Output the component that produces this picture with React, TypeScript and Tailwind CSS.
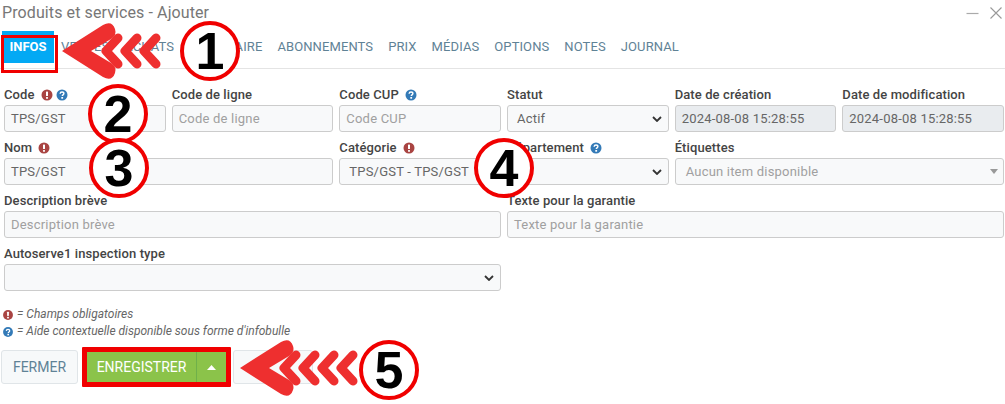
import React from "react";

const Req = () => (
  <svg width="12" height="12" viewBox="0 0 12 12" className="inline-block shrink-0">
    <circle cx="6" cy="6" r="5.5" fill="#a94442" />
    <rect x="5" y="2.4" width="2" height="4.6" rx="0.6" fill="#fff" />
    <rect x="5" y="8" width="2" height="1.8" rx="0.5" fill="#fff" />
  </svg>
);

const Help = () => (
  <svg width="12" height="12" viewBox="0 0 12 12" className="inline-block shrink-0">
    <circle cx="6" cy="6" r="5.5" fill="#337ab7" />
    <path d="M4.1 4.7C4.2 3.5 5 3 6 3c1.1 0 1.9.6 1.9 1.6 0 1.3-1.6 1.3-1.6 2.4" stroke="#fff" strokeWidth="1.4" fill="none" />
    <rect x="5.3" y="8" width="1.8" height="1.7" fill="#fff" />
  </svg>
);

const Label = ({ text, req, help }: { text: string; req?: boolean; help?: boolean }) => (
  <div className="flex items-center gap-[3px] h-[16px] mb-[2px] text-[13px] font-medium text-[#444] whitespace-nowrap tracking-[0.1px]">
    <span className="mr-[3px]">{text}</span>
    {req && <Req />}
    {help && <Help />}
  </div>
);

const boxCls =
  "h-[27px] w-full rounded-[3px] border border-[#ccc] bg-[#f8f9fa] px-[6px] text-[13px] flex items-center tracking-[0.2px] whitespace-nowrap";

const Input = ({ value, placeholder }: { value?: string; placeholder?: string }) => (
  <div className={boxCls + (value ? " text-[#666]" : " text-[#a0a0a0]")}>{value ?? placeholder}</div>
);

const ReadOnly = ({ value }: { value: string }) => (
  <div className="h-[27px] w-full rounded-[3px] border border-[#ccc] bg-[#e9ecef] px-[6px] text-[13px] flex items-center text-[#666] tracking-[0.2px] whitespace-nowrap">
    {value}
  </div>
);

const Caret = () => (
  <svg width="10" height="6" viewBox="0 0 10 6" className="shrink-0 ml-auto">
    <path d="M1 1l4 4 4-4" stroke="#333" strokeWidth="1.8" fill="none" />
  </svg>
);

const Select = ({ value, pl }: { value?: string; pl?: boolean }) => (
  <div className={boxCls + " text-[#666] bg-[#f8f9fa]" + (pl ? " pl-[9px]" : "")}>
    <span>{value}</span>
    <Caret />
  </div>
);

const tabs = [
  ["VENTES", ""],
  ["ACHATS", ""],
  ["INVENTAIRE", ""],
  ["ABONNEMENTS", ""],
  ["PRIX", ""],
  ["MÉDIAS", ""],
  ["OPTIONS", ""],
  ["NOTES", ""],
  ["JOURNAL", ""],
];

const Arrow = ({ x, y, n }: { x: number; y: number; n: number }) => (
  <g transform={`translate(${x} ${y})`}>
    <path
      d="M0 0 L41 -26 Q50 -31 53 -22 Q55 -16 49 -12 L29 0 L49 12 Q55 16 53 22 Q50 31 41 26 Z"
      fill="#ee2f2f"
    />
    {Array.from({ length: n }).map((_, i) => (
      <polyline
        key={i}
        points={`${56 + i * 19},-13 ${44 + i * 19},0 ${56 + i * 19},13`}
        fill="none"
        stroke="#ee2f2f"
        strokeWidth="9"
        strokeLinecap="round"
        strokeLinejoin="round"
      />
    ))}
  </g>
);

const Badge = ({ n, left, top }: { n: string; left: string; top: string }) => (
  <div
    className={`absolute ${left} ${top} w-[60px] h-[60px] rounded-full border-[4px] border-[#f00000] bg-white flex items-center justify-center text-black font-bold text-[52px] leading-none font-['Liberation_Sans',sans-serif]`}
  >
    {n}
  </div>
);

export default function App() {
  return (
    <div className="relative w-[1005px] h-[404px] overflow-hidden bg-white font-['Roboto',sans-serif]">
      {/* Title bar */}
      <div className="flex items-center justify-between h-[26px] pl-[2px] pr-[3px]">
        <div className="text-[16px] text-[#777] tracking-[0.1px]">Produits et services - Ajouter</div>
        <div className="flex items-center gap-[11px] text-[#999]">
          <svg width="13" height="13" viewBox="0 0 13 13">
            <path d="M0.5 6.5h12" stroke="#aaa" strokeWidth="1.2" />
          </svg>
          <svg width="12" height="12" viewBox="0 0 12 12">
            <path d="M0.5 0.5l11 11M11.5 0.5l-11 11" stroke="#999" strokeWidth="1.1" />
          </svg>
        </div>
      </div>

      {/* Tabs */}
      <div className="flex items-center h-[43px] border-b-[1px] border-[#e4e4e4] pl-[2px] mb-[18px]">
        <div className="h-[32px] w-[52px] mr-[7px] bg-[#03a9f4] text-white font-bold text-[13px] flex items-center justify-center">
          INFOS
        </div>
        {tabs.map(([t]) => (
          <div key={t} className="text-[13px] text-[#5f8296] tracking-[0.1px] mr-[15px] whitespace-nowrap">
            {t}
          </div>
        ))}
      </div>

      {/* Form */}
      <div className="grid grid-cols-6 gap-x-[6px] gap-y-[8px] pl-[4px] pr-[1px]">
        <div>
          <Label text="Code" req help />
          <Input value="TPS/GST" />
        </div>
        <div>
          <Label text="Code de ligne" />
          <Input placeholder="Code de ligne" />
        </div>
        <div>
          <Label text="Code CUP" help />
          <Input placeholder="Code CUP" />
        </div>
        <div>
          <Label text="Statut" />
          <Select value="Actif" pl />
        </div>
        <div>
          <Label text="Date de création" />
          <ReadOnly value="2024-08-08 15:28:55" />
        </div>
        <div>
          <Label text="Date de modification" />
          <ReadOnly value="2024-08-08 15:28:55" />
        </div>

        <div className="col-span-2">
          <Label text="Nom" req />
          <Input value="TPS/GST" />
        </div>
        <div>
          <Label text="Catégorie" req />
          <Select value="TPS/GST - TPS/GST" pl />
        </div>
        <div>
          <Label text="Département" help />
          <Select value="" />
        </div>
        <div className="col-span-2">
          <Label text="Étiquettes" />
          <div className={boxCls + " text-[#a0a0a0]"}>
            <span className="pl-[4px]">Aucun item disponible</span>
            <svg width="8" height="5" viewBox="0 0 8 5" className="ml-auto mr-[-1px]">
              <path d="M0 0h8L4 5z" fill="#999" />
            </svg>
          </div>
        </div>

        <div className="col-span-3">
          <Label text="Description brève" />
          <Input placeholder="Description brève" />
        </div>
        <div className="col-span-3">
          <Label text="Texte pour la garantie" />
          <Input placeholder="Texte pour la garantie" />
        </div>

        <div className="col-span-3">
          <Label text="Autoserve1 inspection type" />
          <Select value="" />
        </div>
      </div>

      {/* Legend */}
      <div className="mt-[15px] pl-[2px] text-[12px] italic text-[#666] leading-[17px]">
        <div className="flex items-center gap-[3px]">
          <span className="flex scale-90"><Req /></span>= Champs obligatoires
        </div>
        <div className="flex items-center gap-[3px]">
          <span className="flex scale-90"><Help /></span>= Aide contextuelle disponible sous forme d'infobulle
        </div>
      </div>

      {/* Buttons */}
      <div className="flex items-center mt-[7px] pl-[1px]">
        <div className="h-[34px] w-[77px] rounded-[3px] border border-[#e0e5e8] bg-[#f7f9fa] text-[14px] text-[#5f8296] flex items-center justify-center">
          FERMER
        </div>
        <div className="ml-[4px] flex h-[40px] w-[149px] border-[5px] border-[#f00000] bg-[#8bc34a] rounded-[1px] text-white text-[14px]">
          <div className="w-[110px] flex items-center justify-center border-r border-[#6fb04a]">ENREGISTRER</div>
          <div className="flex-1 flex items-center justify-center">
            <svg width="9" height="5" viewBox="0 0 9 5">
              <path d="M0 5h9L4.5 0z" fill="#fff" />
            </svg>
          </div>
        </div>
        <div className="ml-[2px] h-[34px] w-[80px] rounded-[3px] border border-[#e0e5e8] bg-[#f7f9fa]" />
      </div>

      {/* Annotations */}
      <div className="absolute left-[1px] top-[35px] w-[57px] h-[38px] border-[3px] border-[#f00000]" />
      <svg className="absolute left-0 top-0 pointer-events-none" width="1005" height="404">
        <Arrow x={62} y={51} n={3} />
        <Arrow x={240} y={368} n={4} />
      </svg>
      <Badge n="1" left="left-[180px]" top="top-[21px]" />
      <Badge n="2" left="left-[88px]" top="top-[84px]" />
      <Badge n="3" left="left-[89px]" top="top-[138px]" />
      <Badge n="4" left="left-[474px]" top="top-[138px]" />
      <Badge n="5" left="left-[359px]" top="top-[340px]" />
    </div>
  );
}
